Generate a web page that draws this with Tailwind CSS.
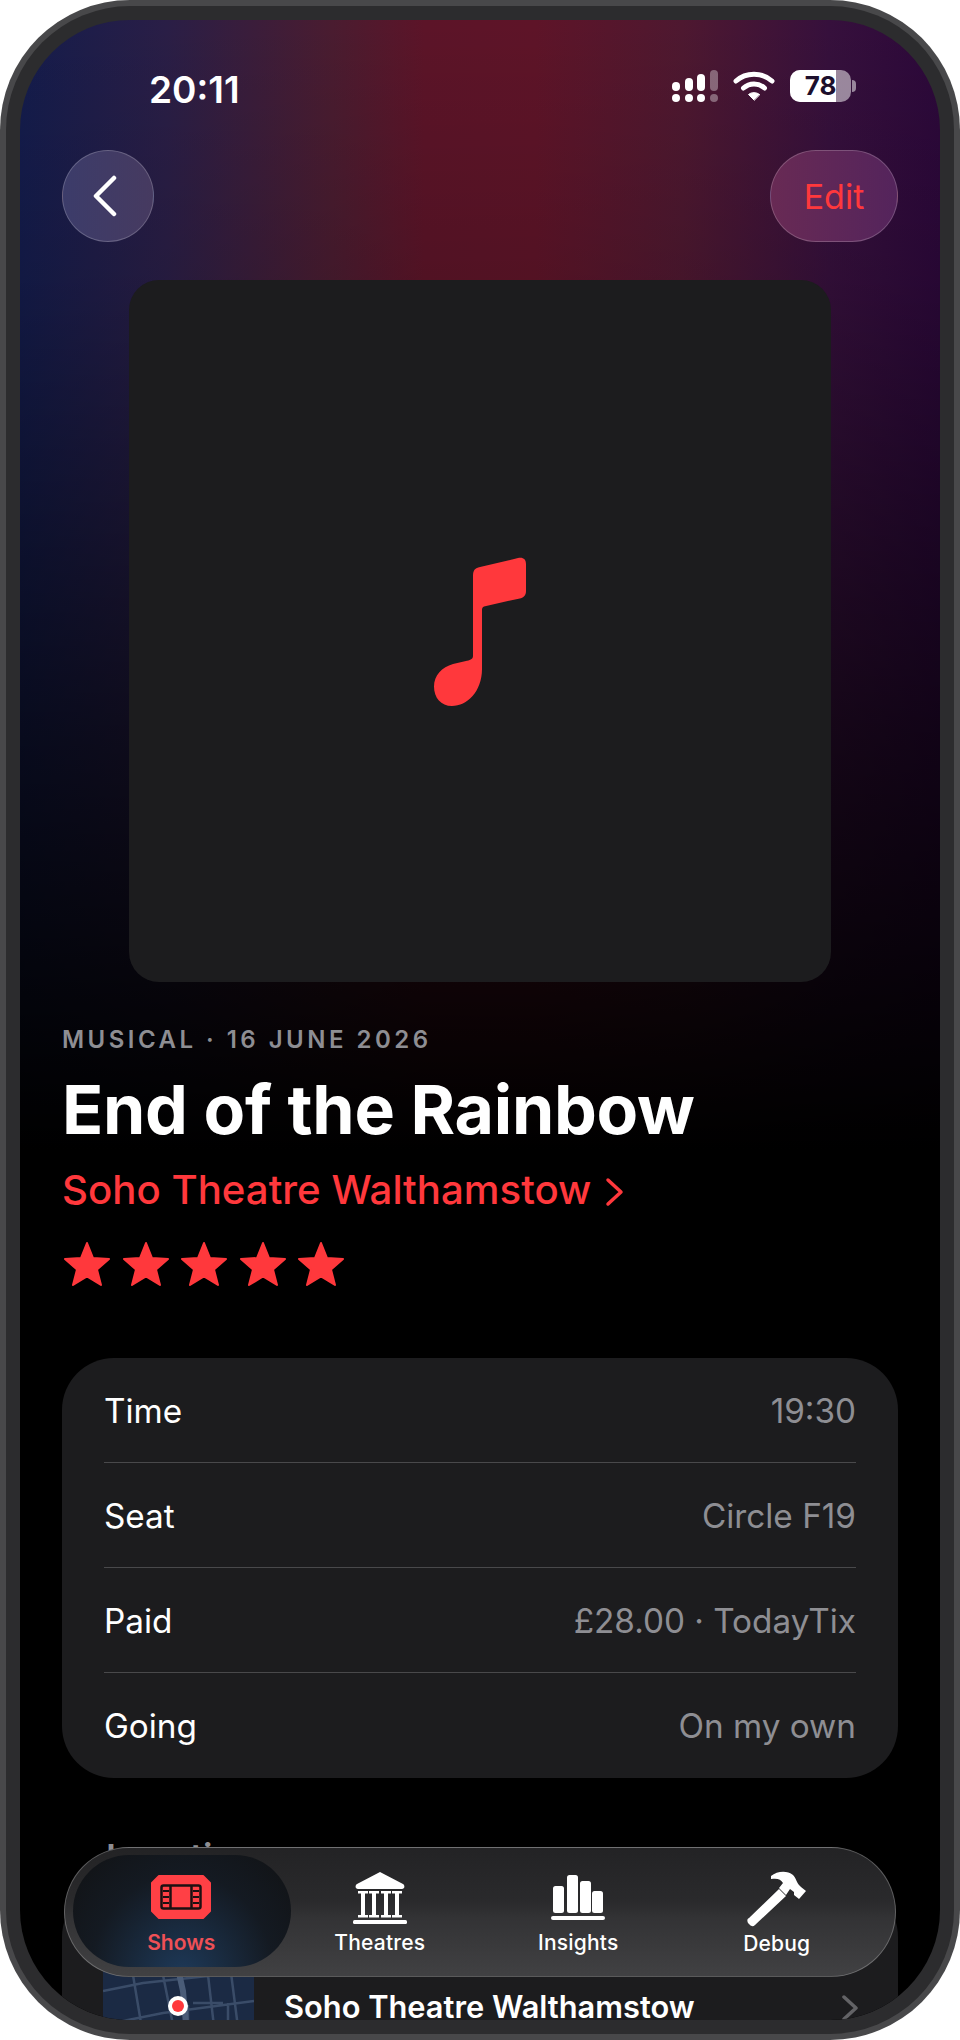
<!DOCTYPE html>
<html lang="en">
<head>
    <meta charset="UTF-8">
    <title>End of the Rainbow</title>
    <script src="https://cdn.jsdelivr.net/npm/@tailwindcss/browser@4"></script>
</head>
<body class="bg-white font-['Inter',sans-serif] text-white">
    <!-- Phone frame -->
    <div class="w-[960px] h-[2040px] rounded-[130px] bg-[#48484a] p-[6px]">
        <div class="h-full rounded-[124px] bg-[#2c2c2e] p-[14px]">
            <div class="relative h-full overflow-hidden rounded-[110px] bg-black bg-[linear-gradient(to_bottom,rgba(0,0,0,0)_0px,rgba(0,0,0,0.12)_260px,rgba(0,0,0,0.62)_720px,#000_1130px),linear-gradient(to_right,#141c4c_0%,#2a1e46_16%,#4a1c30_34%,#5c1428_44%,#5e1428_56%,#4e1830_72%,#36103c_88%,#2c083a_100%)]">

                <!-- Status bar -->
                <div class="flex h-[130px] items-start justify-between pl-[129px] pr-[84px] pt-[48px]">
                    <span class="text-[37px] font-semibold leading-[44px]">20:11</span>
                    <div class="flex items-center gap-[15px] pt-[2px]">
                        <svg width="46" height="32" viewBox="0 0 46 32" fill="#fff">
                            <rect x="0" y="12" width="8" height="9" rx="4"/><circle cx="4" cy="28" r="4"/>
                            <rect x="13" y="8" width="8" height="13" rx="4"/><circle cx="17" cy="28" r="4"/>
                            <rect x="25" y="4" width="8" height="17" rx="4"/><circle cx="29" cy="28" r="4"/>
                            <g opacity="0.35"><rect x="38" y="0" width="8" height="21" rx="4"/><circle cx="42" cy="28" r="4"/></g>
                        </svg>
                        <svg width="42" height="30" viewBox="0 0 42 30" fill="none" stroke="#fff" stroke-width="5" stroke-linecap="round">
                            <path d="M3 10C13 1 29 1 39 10"/>
                            <path d="M10.500 17C16.500 11.500 25.500 11.500 31.500 17"/>
                            <path d="M21 29L15.500 23.500C18.500 21 23.500 21 26.500 23.500Z" fill="#fff" stroke-width="1"/>
                        </svg>
                        <div class="flex items-center">
                            <div class="relative h-[32px] w-[61px] overflow-hidden rounded-[10px] bg-white/50">
                                <div class="h-full w-[46px] bg-white"></div>
                                <span class="absolute inset-0 flex items-center justify-center text-[26px] font-bold leading-none text-[#1c0f2c]">78</span>
                            </div>
                            <div class="ml-[1px] h-[12px] w-[4px] rounded-r-full bg-white/50"></div>
                        </div>
                    </div>
                </div>

                <!-- Nav buttons -->
                <div class="flex items-center justify-between px-[42px]">
                    <button class="flex h-[92px] w-[92px] items-center justify-center rounded-full border border-white/20 bg-[linear-gradient(to_right,#3c3c6a,#463a60)]">
                        <svg class="mr-[6px]" width="26" height="42" viewBox="0 0 26 42" fill="none" stroke="#fff" stroke-width="4.500" stroke-linecap="round" stroke-linejoin="round">
                            <path d="M22 3L4 21L22 39"/>
                        </svg>
                    </button>
                    <button class="flex h-[92px] w-[128px] items-center justify-center rounded-full border border-white/20 bg-[linear-gradient(to_right,#682a54,#54245c)] text-[34px] text-[#ff383c]">Edit</button>
                </div>

                <!-- Artwork -->
                <div class="mx-auto mt-[38px] flex h-[702px] w-[702px] items-center justify-center rounded-[30px] bg-[#1c1c1e]">
                    <svg class="-mt-[3px]" width="92" height="152" viewBox="0 0 92 148" preserveAspectRatio="none" fill="#ff383c">
                        <path d="M39 21C39 16 41 14 45 13L84 4C89 3 92 5 92 10V36C92 40 90 42 87 43L50 51C48 52 48 53 48 55V112C48 134 33 148 18 148C7 148 0 140 0 129C0 118 8 110 19 107L33 104C37 103 39 102 39 99Z"/>
                    </svg>
                </div>

                <!-- Title block -->
                <div class="px-[42px] pt-[43px]">
                    <div class="text-[24px] font-semibold leading-[30px] tracking-[0.145em] text-[#8e8e93]">MUSICAL · 16 JUNE 2026</div>
                    <h1 class="mt-[14px] text-[68px] font-bold leading-[80px] tracking-[-0.004em]">End of the Rainbow</h1>
                    <div class="mt-[16px] flex items-center gap-[14px] text-[40.200px] font-medium leading-[50px] text-[#ff383c]">
                        <span>Soho Theatre Walthamstow</span>
                        <svg class="mt-[4px]" width="19" height="30" viewBox="0 0 19 30" fill="none" stroke="#ff383c" stroke-width="3.500" stroke-linecap="round" stroke-linejoin="round"><path d="M3 3L16 15L3 27"/></svg>
                    </div>
                    <div class="ml-[2px] mt-[26px] flex gap-[12.500px]">
                        <svg width="46" height="46" viewBox="0 0 46 46" fill="#ff383c" stroke="#ff383c" stroke-width="2" stroke-linejoin="round"><path d="M23 2L29 17L45 18L33 28.500L37 44L23 35.500L9 44L13 28.500L1 18L17 17Z"/></svg>
                        <svg width="46" height="46" viewBox="0 0 46 46" fill="#ff383c" stroke="#ff383c" stroke-width="2" stroke-linejoin="round"><path d="M23 2L29 17L45 18L33 28.500L37 44L23 35.500L9 44L13 28.500L1 18L17 17Z"/></svg>
                        <svg width="46" height="46" viewBox="0 0 46 46" fill="#ff383c" stroke="#ff383c" stroke-width="2" stroke-linejoin="round"><path d="M23 2L29 17L45 18L33 28.500L37 44L23 35.500L9 44L13 28.500L1 18L17 17Z"/></svg>
                        <svg width="46" height="46" viewBox="0 0 46 46" fill="#ff383c" stroke="#ff383c" stroke-width="2" stroke-linejoin="round"><path d="M23 2L29 17L45 18L33 28.500L37 44L23 35.500L9 44L13 28.500L1 18L17 17Z"/></svg>
                        <svg width="46" height="46" viewBox="0 0 46 46" fill="#ff383c" stroke="#ff383c" stroke-width="2" stroke-linejoin="round"><path d="M23 2L29 17L45 18L33 28.500L37 44L23 35.500L9 44L13 28.500L1 18L17 17Z"/></svg>
                    </div>
                </div>

                <!-- Details list -->
                <div class="mx-[42px] mt-[71px] rounded-[52px] bg-[#1c1c1e] px-[42px] text-[33.300px]">
                    <div class="flex h-[105px] items-center justify-between border-b border-white/20 pt-[3px]"><span>Time</span><span class="text-[#8e8e93]">19:30</span></div>
                    <div class="flex h-[105px] items-center justify-between border-b border-white/20 pt-[3px]"><span>Seat</span><span class="text-[#8e8e93]">Circle F19</span></div>
                    <div class="flex h-[105px] items-center justify-between border-b border-white/20 pt-[3px]"><span>Paid</span><span class="text-[#8e8e93]">£28.00 · TodayTix</span></div>
                    <div class="flex h-[105px] items-center justify-between pt-[3px]"><span>Going</span><span class="text-[#8e8e93]">On my own</span></div>
                </div>

                <!-- Location -->
                <div class="mx-[42px] mt-[56px] pl-[44px] text-[36px] font-semibold leading-[46px] text-[#8e8e93]">Location</div>
                <div class="mx-[42px] mt-[5px] flex items-center rounded-[52px] bg-[#1c1c1e] p-[40px]">
                    <svg class="ml-[1px] shrink-0 rounded-[20px]" width="151" height="164" viewBox="0 0 151 164" fill="none">
                        <rect width="151" height="164" fill="#1b2a44"/>
                        <g stroke="#3a4c68" stroke-width="2.500">
                            <path d="M0 66L40 58L151 46M0 100L60 88L151 76M30 50L40 110M60 50L72 110M105 50L112 110M128 48L136 110M0 120L60 110M85 80V125M125 78V120M90 78H120"/>
                            <path d="M72 30L80 66L84 110" stroke="#4a5c78" stroke-width="6"/>
                        </g>
                        <path d="M138 100L151 96V120H144Z" fill="#12504e"/>
                        <circle cx="75" cy="81" r="10" fill="#fff"/>
                        <circle cx="75" cy="81" r="6" fill="#ff383c"/>
                    </svg>
                    <span class="ml-[30px] text-[30.800px] font-semibold">Soho Theatre Walthamstow</span>
                    <svg class="ml-auto mt-[2px] shrink-0" width="16" height="26" viewBox="0 0 16 26" fill="none" stroke="#636366" stroke-width="3.500" stroke-linecap="round" stroke-linejoin="round"><path d="M2 2L14 13L2 24"/></svg>
                </div>

                <!-- Floating tab bar -->
                <nav class="absolute left-[44px] top-[1827px] grid h-[130px] w-[832px] grid-cols-4 rounded-[65px] border border-white/25 bg-[linear-gradient(to_bottom,#232325_0%,#2a2a2c_42%,#333335_55%,#414143_100%)] pl-[17px] pr-[19px]">
                    <div class="absolute left-[8px] top-[7px] h-[112px] w-[218px] rounded-[56px] bg-[radial-gradient(ellipse_at_50%_110%,#1e3a5a_0%,#141a22_60%,#111214_100%)]"></div>

                    <div class="relative flex flex-col items-center pt-[27px] text-[#ef5056]">
                        <svg width="62" height="44" viewBox="0 0 62 44">
                            <path d="M9 1H53L60 8V14V30V36L53 43H9L2 36V8Z" fill="#ff4045" stroke="#ff4045" stroke-width="2" stroke-linejoin="round"/>
                            <rect x="11.500" y="10.500" width="39" height="23" rx="2" fill="none" stroke="#1c1012" stroke-width="2.500"/>
                            <path d="M20.500 10V34M41.500 10V34" stroke="#1c1012" stroke-width="2.500"/>
                            <path d="M13 16H19M13 22H19M13 28H19M43 16H49M43 22H49M43 28H49" stroke="#1c1012" stroke-width="2"/>
                        </svg>
                        <span class="mt-[10px] text-[21px] font-semibold leading-[28px]">Shows</span>
                    </div>

                    <div class="relative flex flex-col items-center pt-[24px]">
                        <svg width="54" height="52" viewBox="0 0 54 52" fill="#fff">
                            <path d="M27 0L50 12C52 13 52 17 49 17H5C2 17 2 13 4 12Z"/>
                            <rect x="5" y="19" width="10" height="2.500"/><rect x="16" y="19" width="10" height="2.500"/><rect x="28" y="19" width="10" height="2.500"/><rect x="39" y="19" width="10" height="2.500"/>
                            <rect x="8" y="21" width="4" height="23"/><rect x="19" y="21" width="4" height="23"/><rect x="31" y="21" width="4" height="23"/><rect x="42" y="21" width="4" height="23"/>
                            <rect x="5" y="43" width="10" height="2.500"/><rect x="16" y="43" width="10" height="2.500"/><rect x="28" y="43" width="10" height="2.500"/><rect x="39" y="43" width="10" height="2.500"/>
                            <rect x="0" y="48" width="54" height="4" rx="1.500"/>
                        </svg>
                        <span class="mt-[5px] text-[21px] font-medium leading-[28px] tracking-[0.01em]">Theatres</span>
                    </div>

                    <div class="relative flex flex-col items-center pt-[27px]">
                        <svg width="54" height="46" viewBox="0 0 54 46" fill="#fff">
                            <rect x="2" y="11" width="11" height="27" rx="2.500"/>
                            <rect x="16" y="0" width="11" height="38" rx="2.500"/>
                            <rect x="29" y="6" width="11" height="32" rx="2.500"/>
                            <rect x="41" y="16" width="11" height="22" rx="2.500"/>
                            <rect x="0" y="41" width="54" height="4" rx="2"/>
                        </svg>
                        <span class="mt-[8px] text-[21px] font-medium leading-[28px] tracking-[0.01em]">Insights</span>
                    </div>

                    <div class="relative flex flex-col items-center pt-[23px]">
                        <svg width="60" height="56" viewBox="0 0 60 56" fill="#fff">
                            <path d="M24 5C30 0 40 -1 46 4C49 7 50 12 52 14L54 16L59 20L52 28L47 24V21L43 18L39 24L32 17L36 12C34 8 30 7 24 8Z"/>
                            <path d="M32 18L39 25L8 54C6 56 4 55 3 54L1 52C0 50 0 48 2 47Z"/>
                        </svg>
                        <span class="mt-[3px] text-[21px] font-medium leading-[28px] tracking-[0.01em]">Debug</span>
                    </div>
                </nav>
            </div>
        </div>
    </div>
</body>
</html>
